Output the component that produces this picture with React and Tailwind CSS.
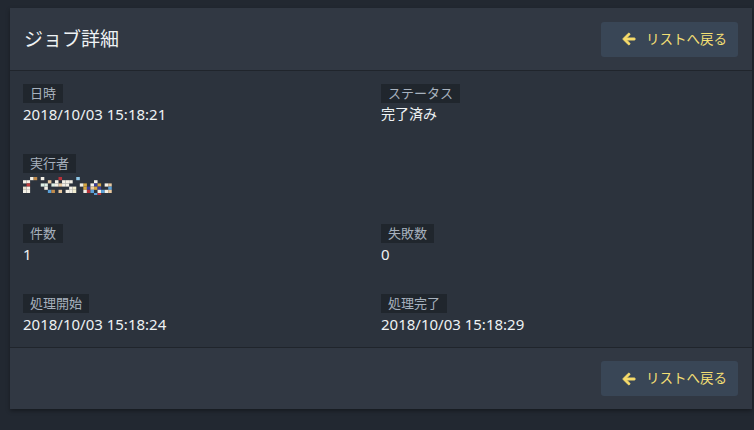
import React from 'react';

const FONT = { fontFamily: '"Noto Sans", "Noto Sans CJK JP", sans-serif' };

// blurred/mosaic executor name
const MOSAIC = [
  [0, 1, '#f4f0e6'], [1, 1, '#f4f0e6'], [2, 0, '#f4f0e6'], [3, 0, '#c08a4a'],
  [0, 3, '#e9e2cf'], [0, 4, '#f4f0e6'], [1, 2, '#c23b3b'], [1, 3, '#f4f0e6'], [1, 4, '#f4f0e6'],
  [5, 0, '#f4f0e6'], [5, 2, '#dff0e6'], [6, 3, '#f4f0e6'], [7, 4, '#5aa0d8'], [8, 4, '#c08a4a'],
  [9, 1, '#f4f0e6'], [10, 0, '#b8323a'], [11, 1, '#f4f0e6'], [12, 1, '#f4f0e6'], [13, 1, '#f4f0e6'],
  [10, 2, '#e8c9a0'], [11, 2, '#f4f0e6'], [12, 2, '#f4f0e6'], [13, 3, '#f4f0e6'],
  [10, 4, '#e8c9a0'], [12, 4, '#f4f0e6'], [13, 4, '#f4f0e6'], [14, 4, '#f1ecd0'], [14, 3, '#f1ecd0'],
  [15, 0, '#8fc8e8'], [17, 2, '#d7a640'], [17, 3, '#d7a640'], [17, 4, '#f4f0e6'],
  [18, 3, '#3a3f9a'], [18, 4, '#b8323a'], [19, 2, '#f4f0e6'], [19, 3, '#e8c9a0'], [19, 4, '#5aa0d8'],
  [20, 1, '#f4f0e6'], [20, 2, '#3a3f9a'], [20, 3, '#d7a640'], [20, 5, '#5aa0d8'],
  [21, 2, '#d7a640'], [21, 3, '#3a3f9a'], [21, 4, '#f4f0e6'], [21, 5, '#b8323a'],
  [22, 4, '#5aa0d8'], [23, 2, '#f4f0e6'], [23, 4, '#f4f0e6'], [24, 2, '#e8c9a0'], [24, 3, '#5aa0d8'], [24, 4, '#e8c9a0'],
  [16, 2, '#f4f0e6'], [7, 1, '#e8c9a0'], [8, 2, '#dff0e6'], [6, 2, '#dff0e6'], [9, 2, '#f4f0e6'],
];

const Mosaic = () => (
  <svg width="90" height="18" viewBox="0 0 90 18">
    {MOSAIC.map(([x, y, c], i) => (
      <rect key={i} x={x * 3.55} y={y * 3.2} width="3.55" height="3.2" fill={c} />
    ))}
  </svg>
);

const ArrowLeft = () => (
  <svg width="14" height="14" viewBox="0 0 448 512" fill="#f7dc6a" stroke="#f7dc6a" strokeWidth="30">
    <path d="M257.5 445.1l-22.2 22.2c-9.4 9.4-24.6 9.4-33.9 0L7 273c-9.4-9.4-9.4-24.6 0-33.9L201.4 44.7c9.4-9.4 24.6-9.4 33.9 0l22.2 22.2c9.5 9.5 9.3 25-.4 34.3L136.6 216H424c13.3 0 24 10.7 24 24v32c0 13.3-10.7 24-24 24H136.6l120.5 114.8c9.8 9.3 10 24.8.4 34.3z" />
  </svg>
);

const BackButton = () => (
  <button className="flex items-center h-[35px] w-[137px] pl-[21px] rounded-[3px] bg-[#394656] text-[#f3df74] text-[13.5px]">
    <ArrowLeft />
    <span className="ml-[10px]">リストへ戻る</span>
  </button>
);

const Field = ({ label, children, jp }) => (
  <div className="flex flex-col items-start">
    <span className="h-[19px] px-[7px] bg-[#20262d] text-[#a7b1bd] text-[13px] leading-[19px]">{label}</span>
    <div className={jp ? 'h-[20px] mt-[1px] text-[14px] leading-[20px] text-[#eef2f4]' : 'h-[20px] mt-[1px] text-[15px] leading-[20px] text-[#eef2f4]'}>{children}</div>
  </div>
);

const App = () => {
  return (
    <div style={FONT} className="min-h-screen bg-[#222831] pt-[8px] pl-[10px]">
      <div className="w-[742px] bg-[#2c333d] shadow-[0_2px_4px_rgba(0,0,0,0.35)]">
        <div className="h-[63px] flex items-center justify-between pl-[14px] pr-[14px] bg-[#313843] border-b border-[#20252c]">
          <h1 className="text-[19px] text-[#eef2f4]">ジョブ詳細</h1>
          <BackButton />
        </div>

        <div className="grid grid-cols-2 gap-y-[30px] px-[13px] pt-[13px] pb-[13px] border-b border-[#20252c]">
          <Field label="日時">2018/10/03 15:18:21</Field>
          <Field label="ステータス" jp>完了済み</Field>
          <Field label="実行者">
            <div className="pt-[3px]"><Mosaic /></div>
          </Field>
          <div />
          <Field label="件数">1</Field>
          <Field label="失敗数">0</Field>
          <Field label="処理開始">2018/10/03 15:18:24</Field>
          <Field label="処理完了">2018/10/03 15:18:29</Field>
        </div>

        <div className="h-[61px] flex items-center justify-end pr-[14px] bg-[#313843]">
          <BackButton />
        </div>
      </div>
    </div>
  );
};

export default App;
